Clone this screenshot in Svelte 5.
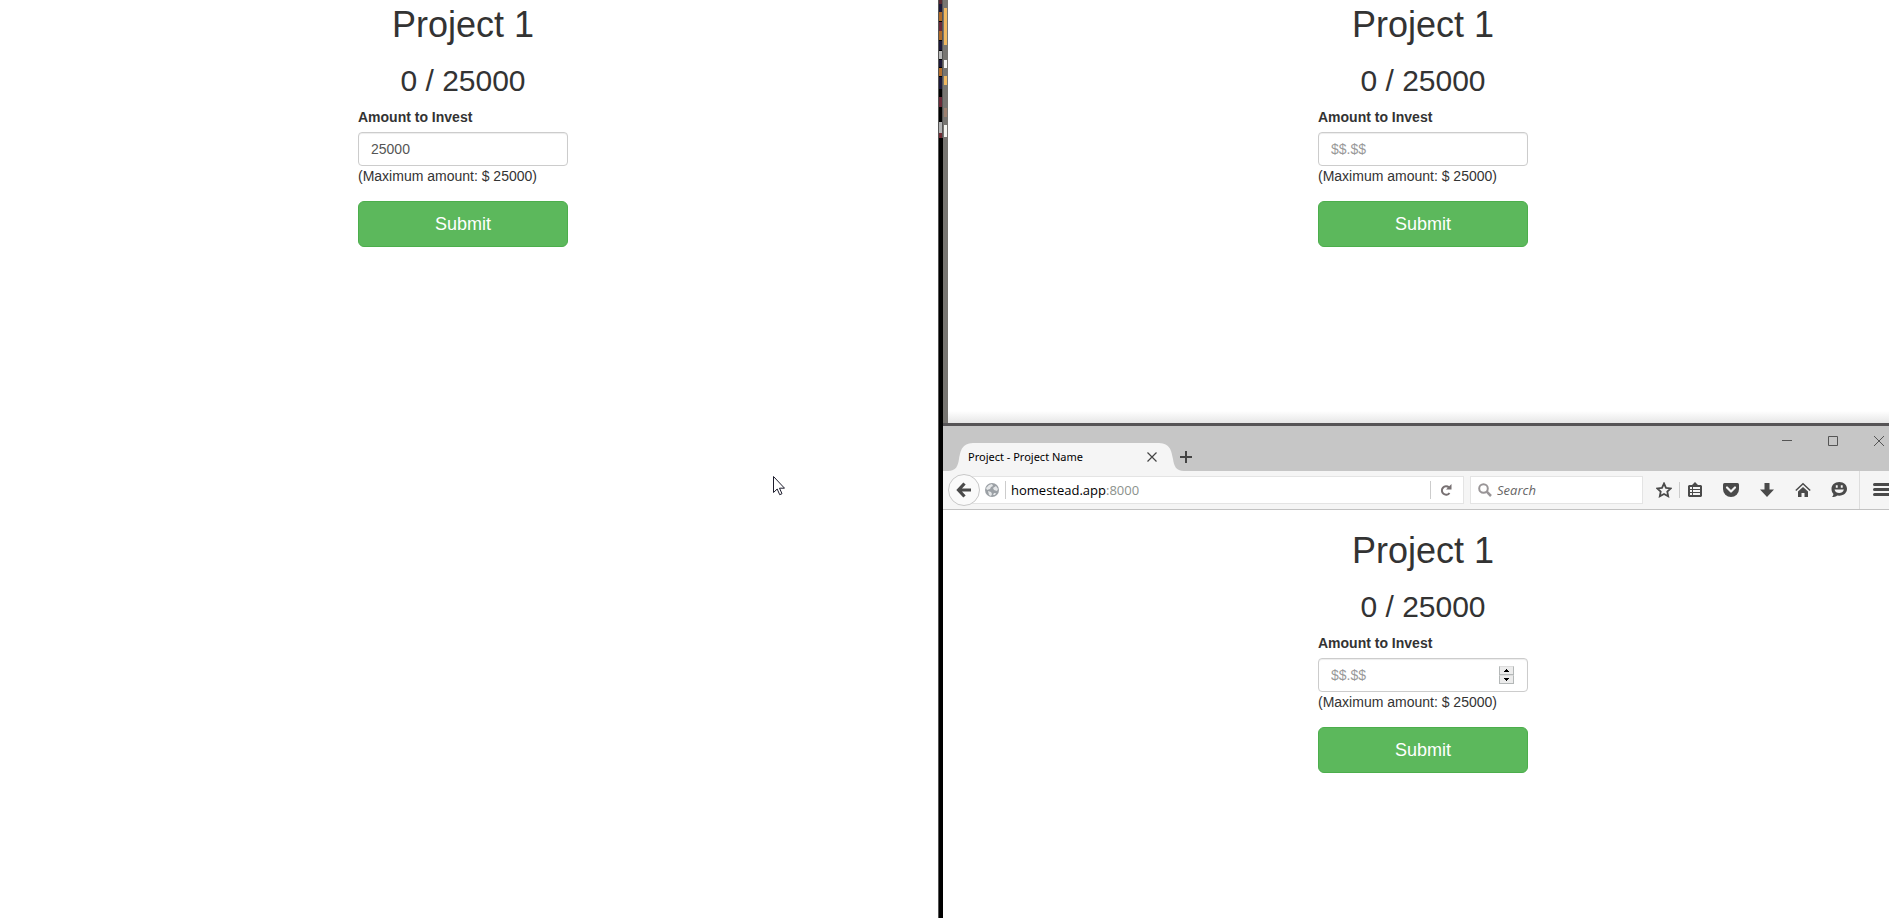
<script>
  let amount = $state(25000);

  const wallpaper = [
    [0, 0, 3, 4, '#5a2830'], [0, 4, 3, 8, '#1c1838'], [0, 12, 3, 9, '#b06a28'], [0, 22, 3, 9, '#6a2a38'],
    [0, 31, 3, 9, '#b06a28'], [0, 41, 3, 9, '#1c1838'], [0, 51, 3, 8, '#b8b8b8'], [0, 60, 3, 7, '#1c1838'],
    [0, 68, 3, 8, '#b8702c'], [0, 77, 3, 12, '#1c1838'], [0, 97, 3, 10, '#6a2a38'], [0, 122, 3, 11, '#b4b4b4'],
    [0, 133, 3, 5, '#702c34'], [3, 0, 1, 138, '#555555'], [5, 8, 3, 37, '#f0b860'], [5, 60, 3, 8, '#f4f4f4'],
    [5, 76, 3, 9, '#f0b860'], [5, 108, 3, 9, '#9c8070'], [5, 125, 3, 12, '#f4f4f0']
  ];
</script>

{#snippet invest(id, filled, stepper)}
  <form class="invest" onsubmit={(e) => e.preventDefault()}>
    <h1>Project 1</h1>
    <h2>0 / 25000</h2>
    <label for={id}>Amount to Invest</label>
    <div class="field">
      {#if filled}
        <input {id} type="number" bind:value={amount} placeholder="$$.$$" />
      {:else}
        <input {id} type="number" placeholder="$$.$$" />
      {/if}
      {#if stepper}
        <span class="stepper">
          <button type="button" aria-label="Increase"><svg viewBox="0 0 5 3"><path d="M2 0h1v1h1v1h1v1H0V2h1V1h1z" /></svg></button>
          <button type="button" aria-label="Decrease"><svg viewBox="0 0 5 3"><path d="M0 0h5v1H4v1H3v1H2V2H1V1H0z" /></svg></button>
        </span>
      {/if}
    </div>
    <p>(Maximum amount: $ 25000)</p>
    <button class="submit" type="submit">Submit</button>
  </form>
{/snippet}

<main>
  <section class="pane left">
    {@render invest('amount-a', true, false)}
    <svg class="pointer" width="12" height="20" viewBox="0 0 12 20" aria-hidden="true"><path d="M.5.5v16l3.700-3.500 2.500 5.700 2.300-1-2.500-5.500h5z" fill="#fff" stroke="#1c1c2c" /></svg>
  </section>
  <div class="divider">
    <svg class="wallpaper" viewBox="0 0 10 140" aria-hidden="true">
      {#each wallpaper as [x, y, w, h, fill]}
        <rect x={x} {y} width={w} height={h} {fill} />
      {/each}
    </svg>
  </div>
  <div class="right">
    <section class="pane upper">{@render invest('amount-b', false, false)}</section>
    <section class="browser">
      <header class="titlebar">
        <div class="tab">
          <svg class="curve" viewBox="0 0 27 28"><path d="M0 28C8 28 10 23 11 16C13 5 15 0 27 0V28Z" /></svg>
          <div class="tabbody">
            <span>Project - Project Name</span>
            <button aria-label="Close tab"><svg width="10" height="10" viewBox="0 0 10 10"><path d="M.5.5l9 9M9.500.5l-9 9" fill="none" stroke="#444" stroke-width="1.200" /></svg></button>
          </div>
          <svg class="curve" viewBox="0 0 27 28"><path d="M27 28C19 28 17 23 16 16C14 5 12 0 0 0V28Z" /></svg>
        </div>
        <button class="plus" aria-label="New tab"><svg width="12" height="12" viewBox="0 0 12 12"><path d="M0 6h12M6 0v12" stroke="#444" stroke-width="2" /></svg></button>
        <div class="winctl">
          <button aria-label="Minimize"><svg width="10" height="10" viewBox="0 0 10 10"><path d="M0 4.500h10" stroke="#555" /></svg></button>
          <button aria-label="Maximize"><svg width="10" height="10" viewBox="0 0 10 10"><path d="M.5.5h9v9h-9z" fill="none" stroke="#555" /></svg></button>
          <button aria-label="Close"><svg width="10" height="10" viewBox="0 0 10 10"><path d="M0 0l10 10M10 0L0 10" fill="none" stroke="#555" /></svg></button>
        </div>
      </header>
      <nav class="toolbar">
        <button class="back" aria-label="Back"><svg width="16" height="16" viewBox="0 0 16 16"><path d="M8.500 1.500L2.500 8l6 6.500M3 8h12" fill="none" stroke="#4a4a4a" stroke-width="3.200" /></svg></button>
        <div class="address">
          <svg width="14" height="14" viewBox="0 0 14 14"><circle cx="7" cy="7" r="7" fill="#9ba0a5" /><path d="M1 5l3-3 3-1 1 2-2 1-1 2-3 1zM8 5l3-2 2 3-1 2-3-1zM3 8l3 1 1 2-1 2-2-1zM9 10l2 0-1 2-2 0z" fill="#e4e6e8" /></svg>
          <i></i>
          <a href="#top">homestead.app<span>:8000</span></a>
          <i></i>
          <button aria-label="Reload"><svg width="12" height="12" viewBox="0 0 12 12"><path d="M9 3.500A4.200 4.200 0 1 0 9.500 9" fill="none" stroke="#777072" stroke-width="2" /><path d="M11.500 0v5.500H6z" fill="#777072" /></svg></button>
        </div>
        <label class="search">
          <svg width="14" height="14" viewBox="0 0 14 14"><circle cx="5.500" cy="5.500" r="4.300" fill="none" stroke="#999597" stroke-width="2" /><path d="M8.700 8.700L13 13" stroke="#999597" stroke-width="2.500" /></svg>
          <input type="text" placeholder="Search" aria-label="Search" />
        </label>
        <div class="tools">
          <button class="star" aria-label="Bookmark"><svg width="16" height="16" viewBox="0 0 16 16"><path d="M8 1.500l2 4.300 4.700.6-3.400 3.200.9 4.700L8 12l-4.200 2.300.9-4.700L1.300 6.400 6 5.800z" fill="none" stroke="#4a4a4a" stroke-width="1.800" /></svg></button>
          <button aria-label="Reading list"><svg width="16" height="16" viewBox="0 0 16 16"><path fill-rule="evenodd" d="M5 3L8 0l3 3h3l1 1v10l-1 1H2l-1-1V4l1-1zM3 5v2h2V5zm3 0v2h7V5zM3 8v2h2V8zm3 0v2h7V8zm-3 3v2h2v-2zm3 0v2h7v-2z" fill="#4a4a4a" /></svg></button>
          <button aria-label="Pocket"><svg width="16" height="16" viewBox="0 0 16 16"><path d="M1.500 1h13Q16 1 16 2.500V7a8 8 0 0 1-16 0V2.500Q0 1 1.500 1z" fill="#4a4a4a" /><path d="M4 5.500l4 4 4-4" fill="none" stroke="#f5f5f5" stroke-width="2.200" stroke-linecap="round" stroke-linejoin="round" /></svg></button>
          <button aria-label="Downloads"><svg width="16" height="16" viewBox="0 0 16 16"><path d="M5.500 1h5v6.500H15L8 15 1 7.500h4.500z" fill="#4a4a4a" /></svg></button>
          <button aria-label="Home"><svg width="16" height="16" viewBox="0 0 16 16"><path d="M.8 8.500L8 1.800l7.200 6.700" fill="none" stroke="#4a4a4a" stroke-width="1.500" /><path d="M3 9.500l5-4.600 5 4.600V15H9.500v-4h-3v4H3z" fill="#4a4a4a" /></svg></button>
          <button aria-label="Chat"><svg width="16" height="16" viewBox="0 0 16 16"><path d="M8.300 0C13 0 16 3 16 6.800s-3 6.900-7.700 6.900l-2-.2C5 15 3 15 1 15c1-.8 1.500-2 1.300-3.200C1 10.500.5 8.800.5 6.800.5 3 3.600 0 8.300 0z" fill="#4a4a4a" /><path d="M4.800 3.300h1.900v2.500H4.800zm5 0h1.900v2.500H9.800zM3.500 7.500h9.400C12 10.200 10.500 11 8.200 11s-3.900-.8-4.700-3.500z" fill="#f5f5f5" /></svg></button>
        </div>
        <button class="menu" aria-label="Menu"><svg width="16" height="14" viewBox="0 0 16 14"><path d="M1.500 1.500H16M1.500 6.500H16M1.500 11.500H16" stroke="#4a4a4a" stroke-width="3" stroke-linecap="round" /></svg></button>
      </nav>
      <div class="pane lower">{@render invest('amount-c', false, true)}</div>
    </section>
  </div>
</main>

<style>
  :global(body) { margin: 0; background: #fff; overflow: hidden; }
  main {
    display: grid;
    grid-template-columns: minmax(0, 938fr) 5px minmax(0, 946fr);
    min-height: 100vh;
    font-family: "Liberation Sans", Arial, sans-serif;
    font-size: 14px;
    line-height: 20px;
    color: #333;
  }
  button { font: inherit; padding: 0; border: 0; background: none; }
  svg { display: block; flex: none; }
  .divider { position: relative; background: #000; box-sizing: border-box; border-left: 1px solid #555; }
  .wallpaper { position: absolute; left: 0; top: 0; width: 10px; height: 140px; z-index: 1; }
  .right { display: flex; flex-direction: column; }
  .pane { display: flex; justify-content: center; align-items: flex-start; box-sizing: border-box; background: #fff; }
  .left { position: relative; padding: 5px 12px 0 0; }
  .pointer { position: absolute; left: 773px; top: 476px; }
  .upper {
    flex: 418 1 0;
    padding: 5px 0 0 9px;
    border-left: 5px solid #777571;
    background: linear-gradient(to top, #e6e6e6, #fff 12px);
  }
  .browser { flex: 492 1 0; display: flex; flex-direction: column; border-top: 3px solid #565456; }
  .lower { flex: 1; padding: 21px 0 0 14px; }

  .invest { width: 210px; display: flex; flex-direction: column; }
  h1, h2, p { margin: 0; }
  h1, h2 { font-weight: 400; text-align: center; }
  h1 { font-size: 36px; line-height: 40px; margin-bottom: 19px; }
  h2 { font-size: 30px; line-height: 33px; margin-bottom: 10px; }
  .invest label { font-weight: 700; margin-bottom: 5px; }
  .field { position: relative; display: flex; }
  .field input {
    width: 100%; height: 34px; box-sizing: border-box; padding: 6px 12px;
    border: 1px solid #ccc; border-radius: 4px; font: inherit; color: #555; background: #fff;
    box-shadow: inset 0 1px 1px rgba(0, 0, 0, .075); appearance: textfield;
  }
  input::placeholder { color: #999; opacity: 1; }
  .stepper { position: absolute; right: 14px; top: 8px; width: 15px; height: 18px; display: grid; }
  .stepper button { display: grid; place-items: center; background: #ececec; border: 1px solid #b4b8b8; border-top-color: #ddd; }
  .stepper svg { width: 5px; height: 3px; }
  .invest p { margin-bottom: 15px; }
  .submit { height: 46px; border: 1px solid #4cae4c; border-radius: 6px; background: #5cb85c; color: #fff; font-size: 18px; }

  .titlebar { display: flex; align-items: flex-end; height: 45px; background: #c6c6c6; padding-left: 5px; box-sizing: border-box; }
  .tab { display: flex; height: 28px; }
  .curve { width: 27px; height: 28px; fill: #f5f5f5; }
  .tabbody {
    display: flex; align-items: center; justify-content: space-between; width: 182px; background: #f5f5f5;
    font-family: "Noto Sans", "Open Sans", sans-serif; font-size: 11px; color: #000; white-space: nowrap;
  }
  .tabbody span { margin-left: -7px; }
  .plus { margin: 0 0 8px -4px; }
  .winctl { display: flex; gap: 36px; align-self: flex-start; margin: 10px 5px 0 auto; }

  .toolbar {
    display: flex; align-items: center; height: 39px; box-sizing: border-box; padding-left: 5px;
    background: #f5f5f5; border-bottom: 1px solid #c2c2c2; font-family: "Open Sans", "Noto Sans", sans-serif;
  }
  .back {
    display: grid; place-items: center; width: 32px; height: 32px; box-sizing: border-box;
    border: 1px solid #c8c8c8; border-radius: 50%; background: #fafafa; z-index: 1; flex: none;
  }
  .address, .search { display: flex; align-items: center; height: 28px; box-sizing: border-box; background: #fff; border: 1px solid #e4e4e4; }
  .address { flex: 1; margin-left: -16px; padding: 0 11px 0 20px; }
  .address i { width: 1px; height: 18px; background: #ccc; margin: 0 9px 0 6px; }
  .address i:first-of-type { margin-right: 5px; }
  .address a { flex: 1; color: #000; text-decoration: none; font-size: 13px; }
  .address a span { color: #8b918c; }
  .search { width: 173px; margin-left: 6px; padding: 0 7px; gap: 5px; }
  .search input { flex: 1; min-width: 0; border: 0; padding: 0; background: none; font: italic 13px/20px "Open Sans", sans-serif; }
  .search input::placeholder { color: #666; }
  .tools { display: flex; gap: 20px; padding: 0 12px 0 13px; }
  .star { padding-right: 7px; border-right: 1px solid #ccc; margin-right: -13px; }
  .menu { align-self: stretch; padding-left: 13px; border-left: 1px solid #ddd; }
</style>
